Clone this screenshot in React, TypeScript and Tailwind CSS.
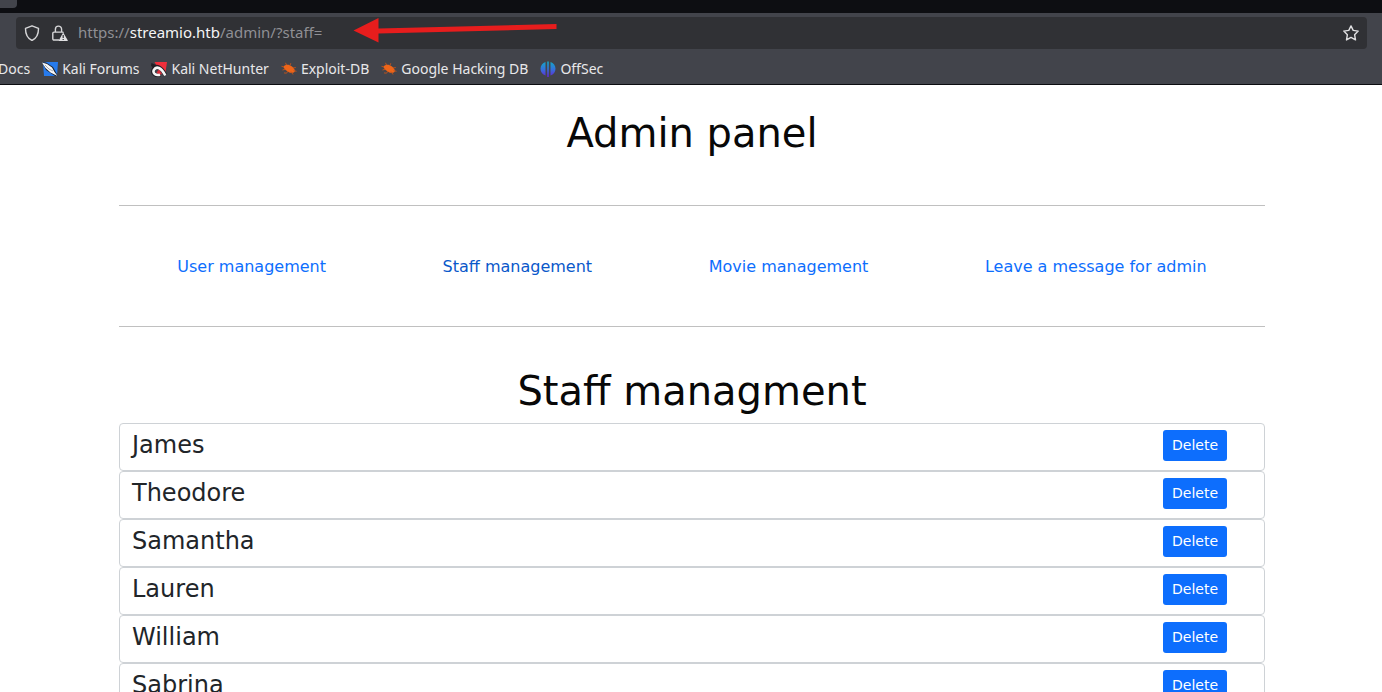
import React from "react";

const staff = ["James", "Theodore", "Samantha", "Lauren", "William", "Sabrina"];

const sections = [
  { label: "User management", href: "#user", active: false },
  { label: "Staff management", href: "#staff", active: true },
  { label: "Movie management", href: "#movie", active: false },
  { label: "Leave a message for admin", href: "#message", active: false },
];

function ShieldIcon() {
  return (
    <svg className="size-4 shrink-0" viewBox="0 0 16 16" fill="none" stroke="#d6d6d8" strokeWidth="1.4" strokeLinejoin="round" aria-hidden="true">
      <path d="M8 .8 14.5 3.4C14.6 9 12.2 13.5 8 15.5 3.8 13.5 1.4 9 1.5 3.4Z" />
    </svg>
  );
}

function LockWarningIcon() {
  return (
    <svg className="size-4 shrink-0" viewBox="0 0 16 16" fill="none" aria-hidden="true">
      <path d="M3.4 7V4.2a3.1 3.1 0 0 1 6.2 0V7M7 15H2a1.2 1.2 0 0 1-1.2-1.200V8.300a1.200 1.200 0 0 1 1.200-1.200h8.500a1.200 1.200 0 0 1 1 .6" stroke="#d6d6d8" strokeWidth="1.400" />
      <path d="M11.200 7.600 15.700 15.200a.5.5 0 0 1-.4.8H7.300a.5.5 0 0 1-.4-.8Z" fill="#e0e0e2" />
      <path d="M11.200 10v3M11.200 13.900v1.100" stroke="#303135" strokeWidth="1.200" />
    </svg>
  );
}

function StarIcon() {
  return (
    <svg className="size-4" viewBox="0 0 16 16" fill="none" stroke="#e0e0e2" strokeWidth="1.400" strokeLinejoin="round" aria-hidden="true">
      <path d="M8 .9 10.200 5.400 15.200 6.100 11.600 9.700 12.500 14.900 8 12.400 3.500 14.900 4.400 9.700.8 6.100 5.800 5.400Z" />
    </svg>
  );
}

function ForumsIcon() {
  return (
    <svg className="size-4 shrink-0" viewBox="0 0 16 16" aria-hidden="true">
      <path d="M1 1h15l-1 14H2Z" fill="#277bed" />
      <path d="M0 1 4 1.500 11 6 16 15 13 15 4 9Z" fill="#20252d" />
      <path d="M0 1.500 5 3 10 6.500 12.500 11 15.500 15 8.500 11.500 3.500 7Z" fill="#f7f8fa" />
      <path d="m3 4 4 4 4 2" stroke="#72767d" fill="none" strokeWidth=".6" />
    </svg>
  );
}

function NetHunterIcon() {
  return (
    <svg className="size-4 shrink-0" viewBox="0 0 16 16" fill="none" aria-hidden="true">
      <path d="M3.500 1H16l-2 13.500L8 9Z" fill="#f02f3c" />
      <path d="M.5 2 5 4 3 7 0 5Z" fill="#211f25" />
      <path d="M9 14C4.500 15.500.8 12 2.500 8.500 5 4 10 5 14.500 14.500" stroke="#211f25" strokeWidth="4" />
      <path d="M5.500 11.500 8 8.500l3 4.500-3 1Z" fill="#d82b39" />
      <path d="M9 13.700C4.800 15 1.300 12 2.900 8.900 5.200 4.800 10 6 14.300 14.500" stroke="#f5f5f5" strokeWidth="2.600" />
    </svg>
  );
}

function BugIcon() {
  return (
    <svg className="size-4 shrink-0" viewBox="0 0 16 16" fill="none" aria-hidden="true">
      <path d="M2.500 5.500C4.500 3 8 3 11 5.500c2.500 2 3.500 4 2.500 5.500-2 1.500-5 1-7.500-1C4 8.500 2.500 7 2.500 5.500Z" fill="#ee6519" />
      <path d="M5.500 4 4.500 1.800M9 4.500l.8-2.300M12 7l2.800-.5M12.500 9.500l3 .8M10 10.500l2 3M7 10l-1.500 2.200-2.500-.3M4 8.300 1.500 9M2.800 6 .5 5.300" stroke="#c65318" strokeWidth=".9" />
    </svg>
  );
}

function OffSecIcon() {
  return (
    <svg className="size-4 shrink-0" viewBox="0 0 16 16" aria-hidden="true">
      <defs>
        <linearGradient id="offsec" x1="0" y1="0" x2="0" y2="1">
          <stop offset="0" stopColor="#12a9c4" />
          <stop offset=".5" stopColor="#3472dc" />
          <stop offset="1" stopColor="#6424d3" />
        </linearGradient>
      </defs>
      <path d="M5.500 1v13.500C2.500 13.500.5 11 .5 7.800S2.500 2 5.500 1ZM7.200.5h1.600v15.500H7.200ZM10.500 1c3 1 5 3.500 5 6.800s-2 5.700-5 6.700Z" fill="url(#offsec)" />
    </svg>
  );
}

const bookmarks = [
  { label: "Kali Forums", icon: <ForumsIcon /> },
  { label: "Kali NetHunter", icon: <NetHunterIcon /> },
  { label: "Exploit-DB", icon: <BugIcon /> },
  { label: "Google Hacking DB", icon: <BugIcon /> },
  { label: "OffSec", icon: <OffSecIcon /> },
];

function BrowserChrome() {
  return (
    <header className="shrink-0 border-b border-[#0c0c10] bg-[#42444b] font-['Noto_Sans',sans-serif] text-sm">
      <div className="h-[13px] bg-[#0d0e12]">
        <div className="h-2 w-[17px] rounded-br bg-[#42444b]" />
      </div>
      <div className="px-4 pt-1">
        <div className="relative -mr-px flex h-8 items-center rounded bg-[#303135] px-2">
          <ShieldIcon />
          <span className="ml-3 flex"><LockWarningIcon /></span>
          <p className="ml-2.5 flex-1 text-[15px] text-[#8f8f94]">
            https://<span className="text-[#f5f5f6]">streamio.htb</span>/admin/?staff=
          </p>
          <button type="button" aria-label="Bookmark this page"><StarIcon /></button>
          <svg className="absolute top-0 left-[337px] h-7 w-52" viewBox="0 0 208 28" aria-hidden="true">
            <path d="M.5 13.500 25.500 1v10.500l178-4.500v5l-178 4.500v9Z" fill="#e71d1d" />
          </svg>
        </div>
      </div>
      <nav aria-label="Bookmarks" className="flex h-[35px] items-center gap-3 pt-1 text-[#e8e8ea]">
        <a href="#docs" className="-ml-0.5">Docs</a>
        {bookmarks.map(({ label, icon }) => (
          <a key={label} href={"#" + label} className="flex items-center gap-1 whitespace-nowrap">
            {icon}
            {label}
          </a>
        ))}
      </nav>
    </header>
  );
}

export default function App() {
  return (
    <div className="flex h-screen flex-col overflow-hidden bg-white">
      <BrowserChrome />
      <main className="min-h-0 flex-1 overflow-hidden pl-0.5 font-['DejaVu_Sans',sans-serif] text-[#212529]">
        <div className="mx-auto w-full max-w-[1146px]">
          <h1 className="pt-6 pb-12 text-center text-[40px] leading-12 text-[#080808]">Admin panel</h1>
          <nav aria-label="Admin sections" className="flex h-[122px] items-center justify-around border-y border-[#c0c0c0] pt-0.5">
            {sections.map(({ label, href, active }) => (
              <a key={label} href={href} className={active ? "text-[#0a58ca]" : "text-[#0d6efd]"}>
                {label}
              </a>
            ))}
          </nav>
          <h2 className="pt-10 pb-2 text-center text-[40px] leading-12 text-[#080808]">Staff managment</h2>
          <ul>
            {staff.map((name) => (
              <li key={name} className="flex h-12 items-start justify-between rounded border border-[#ced2d6] pt-1.5 pr-[37px] pl-3">
                <span className="text-2xl leading-[30px]">{name}</span>
                <button type="button" aria-label={"Delete " + name} className="rounded-[3px] bg-[#0d6efd] px-[9px] py-[5px] text-sm leading-[21px] text-white">
                  Delete
                </button>
              </li>
            ))}
          </ul>
        </div>
      </main>
    </div>
  );
}
